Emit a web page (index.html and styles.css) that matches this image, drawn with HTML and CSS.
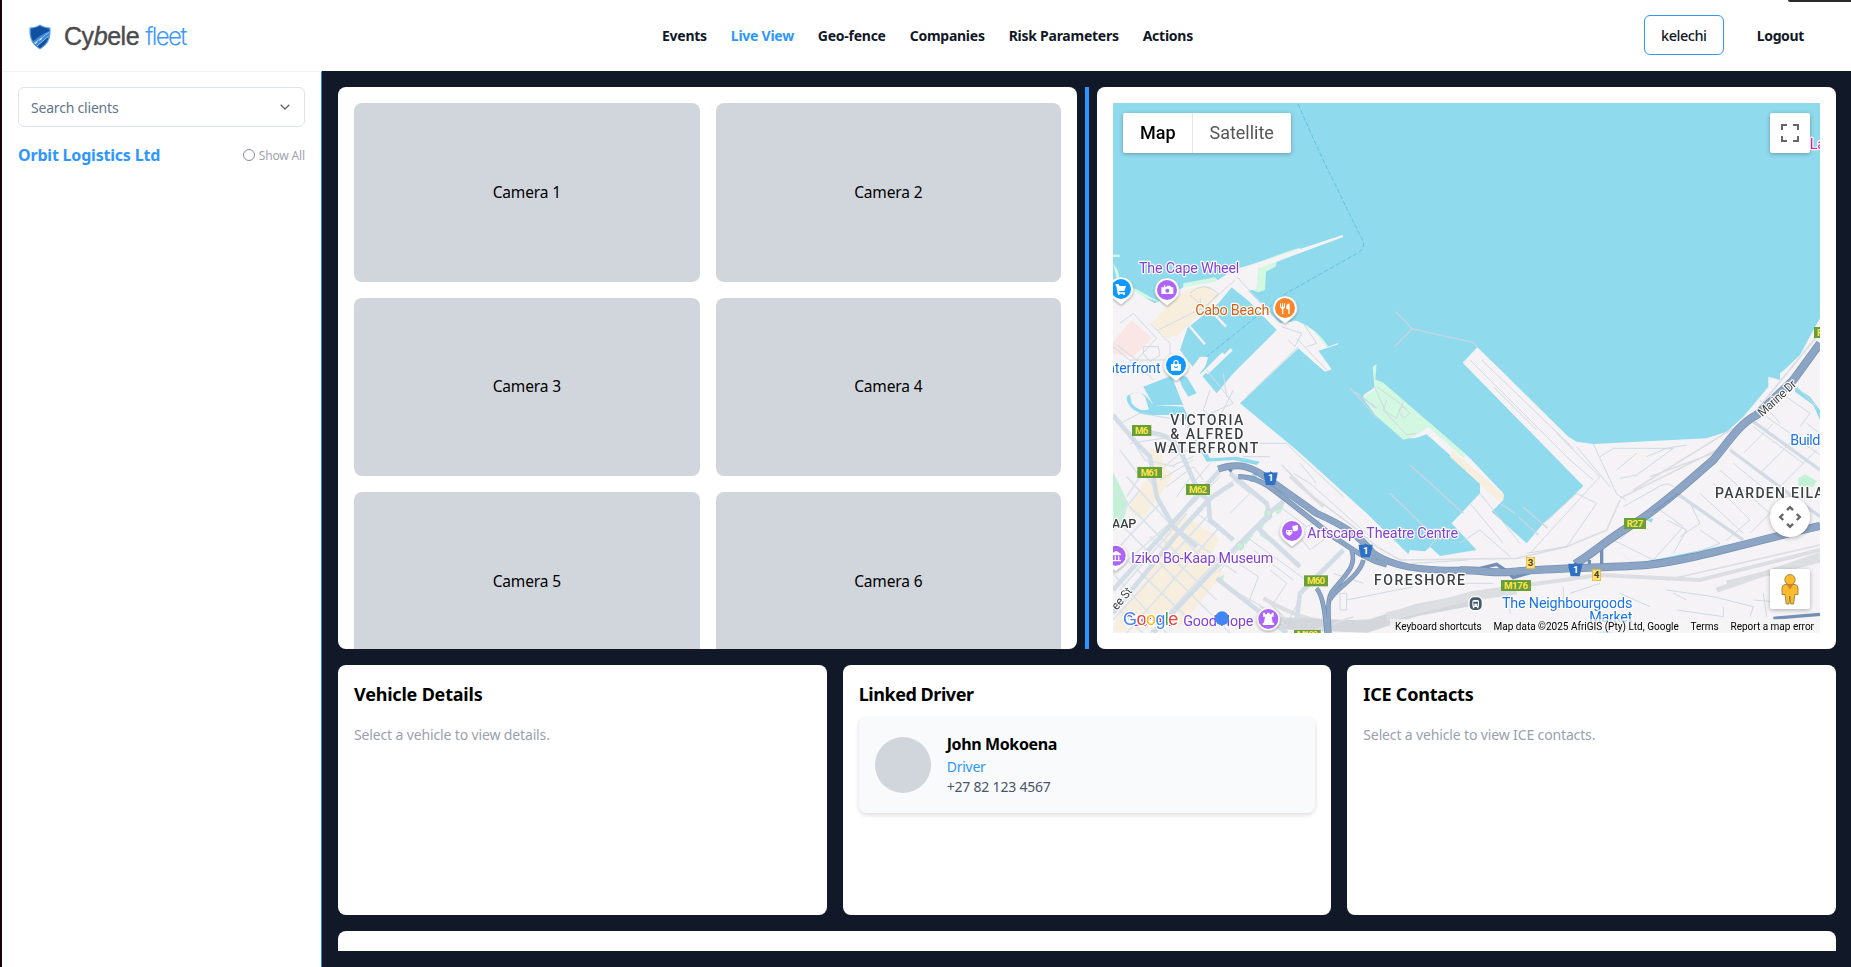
FILE: index.html
```html
<!DOCTYPE html>
<html lang="en">
<head>
<meta charset="utf-8">
<title>Cybele fleet</title>
<link rel="stylesheet" href="styles.css">
</head>
<body>
<div class="app">
  <header class="header">
    <div class="brand">
      <svg class="shield" viewBox="0 0 22 26" width="22" height="26">
        <path d="M11 .5 C14 2.500 18 3.200 21.500 3.500 C22 13 20.500 20 11 25.500 C1.500 20 0 13 .5 3.500 C4 3.200 8 2.500 11 .5Z" fill="#5a9fe6"/>
        <path d="M11 1.800 C14 3.800 17 4.400 20.200 4.700 C20.600 13 19 19 11 24.300 C3 19 1.400 13 1.800 4.700 C5 4.400 8 3.800 11 1.800Z" fill="#124f9e"/>
        <path d="M3.500 17.500 C9 13 15 9 20.300 7 L19.800 12.500 C15 15 11 19 8.500 22.500Z" fill="#3a86da"/>
        <path d="M4.500 19.500 L20 8.500 M8 22 L19.800 12" stroke="#b5d5f7" stroke-width=".8" fill="none"/>
        <path d="M6 19.800 l2.500-2 M10.500 16.300 l2.500-2" stroke="#fff" stroke-width=".9"/>
      </svg>
      <div class="wordmark"><span class="wm-a">Cy<i>b</i>ele</span><span class="wm-b">fleet</span></div>
    </div>
    <nav class="nav">
      <a>Events</a><a class="active">Live View</a><a>Geo-fence</a><a>Companies</a><a>Risk Parameters</a><a>Actions</a>
    </nav>
    <div class="account">
      <button class="user">kelechi</button>
      <a class="logout">Logout</a>
    </div>
  </header>

  <div class="body">
    <aside class="sidebar">
      <div class="select">
        <span>Search clients</span>
        <svg width="10" height="6" viewBox="0 0 10 6"><path d="M.7.700 5 5 9.300.7" fill="none" stroke="#666" stroke-width="1.300"/></svg>
      </div>
      <div class="client">
        <span class="client-name">Orbit Logistics Ltd</span>
        <span class="show-all"><i class="radio"></i>Show All</span>
      </div>
    </aside>

    <main class="main">
      <section class="top">
        <div class="card cameras">
          <div class="cam">Camera 1</div><div class="cam">Camera 2</div>
          <div class="cam">Camera 3</div><div class="cam">Camera 4</div>
          <div class="cam">Camera 5</div><div class="cam">Camera 6</div>
        </div>
        <div class="divider"></div>
        <div class="card map-card">
          <div class="map">
            <svg class="map-art" viewBox="39 39 2121 1590" width="707" height="530">
              <rect x="39" y="39" width="2121" height="1590" fill="#90daee"/>
              <!-- parks on the shoreline -->
              <g fill="#d3f8e2">
                <path d="M39 494h20v7H39z M39 520l14 20 8 35-8 2z M60 585 L110 598 150 620 190 640 90 610Z"/>
                <path d="M250 580 L345 562 355 574 400 545 560 485 600 473 600 482 530 515 527 530 498 545 495 600 475 607 450 598 430 570 250 600Z"/>
                <path d="M580 690 Q640 705 684 768 L675 775 610 720Z"/>
              </g>
              <!-- land -->
              <path fill="#f5f3f5" d="M39 595 L95 600 165 640 250 592 345 575 400 540 520 503 728 435 730 441 530 515 475 535 468 596 445 602 540 700 590 692 640 722 680 772 715 759 715 763 655 782 695 838 675 845 640 815 595 775 420 940 590 1080 800 1270 925 1392 930 1380 975 1384 990 1370 1020 1398 1130 1380 1055 1300 1140 1210 1140 1180 1080 1122 980 1033 945 1045 912 1045 830 970 790 915 825 892 850 890 990 1000 1110 1105 1210 1210 1210 1230 1175 1265 1280 1360 1330 1300 1350 1285 1450 1188 1088 818 1132 772 1200 838 1405 1040 1430 1055 1480 1062 1820 1045 1880 1025 1930 980 2005 890 2005 860 2040 870 2040 850 2055 838 2100 795 2140 720 2160 685 2160 1629 39 1629Z"/>
              <!-- inner basins -->
              <g fill="#90daee">
                <path d="M395 592 L445 632 530 720 470 750 440 770 330 870 310 850 325 800 300 800 278 830 240 780 262 715 280 700 355 640Z"/>
                <path d="M330 810 L400 770 530 720 400 850 350 910 300 850Z"/>
                <path d="M130 890 L220 855 260 860 290 910 265 920 240 880 250 945 160 945Z"/>
                <path d="M80 920 Q110 895 140 920 L160 945 250 950 260 970 300 990 300 1050 330 1105 410 1100 480 1115 470 1125 400 1110 320 1115 280 1045 250 975 140 975 Q80 960 80 920Z"/>
                <path d="M460 1145l14 0-8 30-16 0z"/>
                <path d="M2085 890 L2130 920 2160 960 2160 990 2140 945 2085 905Z"/>
                <path d="M1535 1370l65 48 20 0 540-112v8l-530 122-14-8 10-6-20 0z M1640 1290l20-6-5 14z"/>
                <path d="M1494 1629 q20-14 44 0z"/>
              </g>
              <path d="M90 915q22-18 45 5l12 38q-30 10-52-18z" fill="#f5f3f5"/>
              <path d="M257 965 L300 985 325 1095 285 1045Z" fill="#f5f3f5"/>
              <g stroke="#f5f3f5" fill="none">
                <path d="M270 710 L315 763 M345 675 L378 710" stroke-width="7"/>
                <path d="M395 778 L320 850 M370 790 L290 870" stroke-width="9"/>
                <path d="M225 860 L265 960" stroke-width="18"/>
              </g>
              <!-- ferry route -->
              <path d="M594 42 L660 190 L745 365 L790 455 Q795 475 775 488 L550 615 L320 800" fill="none" stroke="#5fc3e0" stroke-width="3" stroke-dasharray="14 6"/>
              <!-- landuse -->
              <g fill="#fae6e4"><path d="M50 745 L95 690 155 745 100 800 39 790V760Z"/></g>
              <g fill="#f8eedd">
                <path d="M155 700 L210 640 260 600 320 585 360 620 270 700 235 735 200 745Z"/>
                <path d="M150 1075h35l5 60 30 15-35 60-60 80-40-30 30-60 40-50z"/>
                <path d="M210 1300 L260 1280 360 1345 330 1400 370 1450 240 1610 39 1625 60 1560 130 1480 180 1380Z"/>
                <path d="M1055 1080 L1212 1215 1210 1228 1195 1232 1050 1100Z"/>
              </g>
              <g fill="#d3f8e2">
                <path d="M818 830 l12-8-4 46 24 10 140 122 110 95-10 8-105-92-38 26-37 12-82-72-42-55 38-22z"/>
                <path d="M2095 1165l20-12 35 20-10 18h-45z" fill="#c3f1d5"/>
                <path d="M39 1145 L85 1240 70 1290 39 1325Z" fill="#c3f1d5"/>
                <path d="M525 1260 l30-25-12 30-10 10z M430 1355l35-25-28 35z M470 1320l30-30-20 40z M480 1325l55 35-10 5-45-28z M355 1465l18-12-4 20z" fill="#c3f1d5"/>
              </g>
              <!-- breakwaters -->
              <g fill="none" stroke="#c9d5e2" stroke-width="4">
                <path d="M887 665 L937 717 1110 755 1120 757 1132 772 M937 717 L883 770"/>
                <path d="M752 895 L832 985 M765 905 L830 955 M930 1125 L1090 1270 M870 1210 L1010 1345 985 1375 M1200 1240l45 30 M1268 1250l75 65 M1255 1280l60 55"/>
              </g>
              <!-- rail yards -->
              <g fill="none" stroke="#dcdee2">
                <path d="M490 1525 Q600 1590 700 1600 L860 1590 1110 1510 1320 1480 1500 1455 1800 1470 2160 1380" stroke-width="12"/>
                <path d="M540 1600 L800 1610 950 1560 1110 1530" stroke="#d3d6da" stroke-width="36"/>
                <path d="M860 1580 L1110 1520 1250 1500" stroke-width="26"/>
                <path d="M1850 1500 L2160 1395 M1880 1480 L2160 1410" stroke-width="16"/>
                <path d="M500 1530l60 60 M480 1550l80 60 M620 1630 L760 1580 M1700 1470 L2160 1365" stroke-width="5"/>
                <path d="M545 1125 L640 1220 760 1310 830 1370 900 1410 1250 1405 1400 1370 1520 1320 1560 1230 M1560 1225 L1850 1080 1930 1010 2150 740 M1600 1200 L1900 1015 M1650 1160 L1840 1090" stroke-width="5"/>
                <path d="M570 1160l100 90" stroke-width="9"/>
              </g>
              <!-- local streets -->
              <g fill="none" stroke="#cfdae3" stroke-width="3">
                <path d="M60 700l40-30 70 75-60 65-60-45 M40 770l60 50 M130 770h45l5 25-30 20-20-25z M60 830l50-10 50 50 M150 700l60 60 0 50-120 0 M270 610q40-40 85 0l-40 45-45-40 M300 625l5 40 M405 570l-90 80-140 70 M410 560l130 140 M545 710l60 20-20 40-20-20 M590 745l90 95"/>
                <path d="M595 770 L440 920 M610 700l40 60-30 10 M320 840l80 100-90 40 M330 900l-20 60 60 60 M400 900l-40 80 M370 850l10 70"/>
                <path d="M60 1000l60-30 120 20 40 40 M90 1060l130-20 M190 1060l50 30-70 60 M200 1090l80-10 M210 1130l70-30 M180 1170l100-60 M200 1190l80-60 30 40 M230 1220l50-70"/>
                <path d="M440 1060l120 0 40 40 130 120 M430 1100l80 0 M580 1150l50 30 180 160 M600 1120l50 60 M330 1120l-50 60 M360 1160l-90 90 M390 1180l-100 90 110 80 M400 1170l50 40-60 60"/>
                <path d="M355 1445l90-100 180 130-60 120-210-120 M415 1420l60 40-30 80 M460 1380l120 90 M510 1440l50 40-40 60 M540 1250l80 60 40-20 M590 1330l40 50 80-60"/>
                <path d="M720 1510h20v50h-20z M740 1530l200-40"/>
              </g>
              <g fill="none" stroke="#dbe4ec" stroke-width="5">
                <path d="M39 1300 L120 1200 M39 1390 L180 1240 M39 1450 L220 1290 M60 1500 L260 1270 M39 1590 L330 1270 M80 1629 L360 1310 M150 1629 L370 1390"/>
                <path d="M39 1200 L260 1420 M80 1160 L300 1400 M39 1280 L390 1629 M39 1370 L280 1600 M39 1450 L200 1629 M200 1290 L410 1450 M150 1340 L350 1530 M39 1540l90 89"/>
                <path d="M60 1080l60 80-40 60 M120 1130l50 70 M85 1030l50 80 90 20"/>
              </g>
              <g fill="none" stroke="#d3dde7" stroke-width="14">
                <path d="M39 975 L110 1060 150 1100 170 1220 220 1310 290 1370 M120 1025 Q220 1030 240 1080 L280 1170 300 1210 325 1230 330 1290 400 1350 M360 1140 L39 1500 M400 1180 L330 1225 225 1340 39 1570 M390 1150 L500 1240 510 1280 470 1310 600 1430 M510 1270 L330 1450 160 1629 M500 1275 L550 1235 M730 1380 L600 1510 590 1590 M350 1465 L560 1629"/>
              </g>
              <g fill="#c3f1d5" stroke="#cddbe3" stroke-width="4"><circle cx="505" cy="1270" r="10"/><circle cx="420" cy="1368" r="11"/></g>
              <g transform="translate(1080 810)" fill="none" stroke="#cfdae3" stroke-width="3">
                <path d="M65 0 L340 265 M30 0L330 300 400 360 M100 80L230 210 M400 252l70 150 30 20 M350 260l100 120 M290 220l130 130-210 230 M250 490l100-90 60 30-90 130-120 20 M420 290l40-25 180 0-110 80-50 10 M470 330l60-50 M560 290l60-25 60-10 M640 380q-20-20-60 10l-90 50 M560 460l-80 80 M460 540l120 60 90-100-70-50 M620 480l60 30-40 70 M690 430l30 60-60 40 M720 510l60 40-80 30"/>
                <path d="M920 170l160 115 M880 200l150 110 M850 280l90-90 M900 340l120-120 M960 380l110-110 M820 310l110 90 M780 330l150 130-60 60 M760 370l110 110-70 60 M720 400l130 120 M950 90l100 70-30 40 M990 60l80 80 M900 120l60 70 M1040 190l40 30"/>
                <path d="M0 550l60-40 90 80 M30 430l100 120 M60 400l120 150 M310 680v60 M330 700l90-30 M0 670h100 M620 690l140 20 120 30-10 30 M640 700l40 20 M880 720l120 10 M790 740v30l-140-20 M480 700l90 40 M910 700l10 70 M150 700v60"/>
                <path d="M810 270 L1080 470 M880 185 L1080 330 M650 400 L850 540" stroke="#d0dbe6" stroke-width="10"/>
              </g>
              <g transform="translate(0 810)" fill="none" stroke="#cfdae3" stroke-width="3">
                <path d="M825 85l30 65 M830 80l70 50 20 20 M860 120l-10 30 40 25 20-50 M895 150l15-10 20 20-20 15z M850 150l70 75 30-5 M935 610l170-10 M700 640l90 30"/>
              </g>
              <!-- motorways -->
              <g transform="translate(0 810)" fill="none" stroke-linejoin="round">
                <g stroke="#738fb4">
                  <path d="M355 327 C420 305 460 320 520 368 L650 460 C740 500 780 530 820 580 C880 620 950 631 1085 631" stroke-width="21"/>
                  <path d="M415 350 C480 350 520 390 560 420 L700 530 C760 570 800 600 860 615" stroke-width="16"/>
                  <path d="M755 570 C770 620 740 640 700 690 C680 710 685 760 688 820 M790 600 C780 650 700 690 690 720 M650 685 C670 710 675 760 680 820" stroke-width="14"/>
                  <path d="M378 318 L395 335" stroke-width="9"/>
                </g>
                <g stroke="#8ca5c4">
                  <path d="M355 327 C420 305 460 320 520 368 L650 460 C740 500 780 530 820 580 C880 620 950 631 1085 631" stroke-width="17"/>
                  <path d="M415 350 C480 350 520 390 560 420 L700 530 C760 570 800 600 860 615" stroke-width="12"/>
                  <path d="M755 570 C770 620 740 640 700 690 C680 710 685 760 688 820 M790 600 C780 650 700 690 690 720 M650 685 C670 710 675 760 680 820" stroke-width="10"/>
                </g>
              </g>
              <g transform="translate(1080 810)" fill="none">
                <g stroke="#738fb4">
                  <path d="M0 631 C60 630 100 640 150 636 C250 625 480 622 560 615 C700 600 850 550 1080 498" stroke-width="24"/>
                  <path d="M345 612 C400 580 450 530 540 480 C640 410 700 350 760 300 C810 240 840 190 890 165 L1000 60 1080 -50" stroke-width="25"/>
                  <path d="M425 560V615 M388 600v20 M370 620l40 12 20-10 M60 625l50-12 30 20 20 20 50-15 M940 775l140-12" stroke-width="10"/>
                </g>
                <g stroke="#8ca5c4">
                  <path d="M0 631 C60 630 100 640 150 636 C250 625 480 622 560 615 C700 600 850 550 1080 498" stroke-width="20"/>
                  <path d="M345 612 C400 580 450 530 540 480 C640 410 700 350 760 300 C810 240 840 190 890 165 L1000 60 1080 -50" stroke-width="21"/>
                </g>
                <path d="M580 455 L655 400" stroke="#738fb4" stroke-width="3"/>
              </g>

              <!-- road shields -->
              <g class="shield-text">
                <g fill="#689f38"><rect x="96" y="1005" width="58" height="33"/><rect x="112" y="1131" width="74" height="33"/><rect x="258" y="1182" width="72" height="33"/><rect x="612" y="1456" width="72" height="33"/><rect x="1572" y="1284" width="66" height="33"/><rect x="1203" y="1470" width="90" height="33"/><rect x="582" y="1620" width="80" height="20"/><rect x="2142" y="711" width="40" height="33"/></g>
                <g fill="#ffe44d"><text x="125" y="1031" textLength="40">M6</text><text x="149" y="1157" textLength="54">M61</text><text x="294" y="1208" textLength="54">M62</text><text x="648" y="1482" textLength="54">M60</text><text x="1605" y="1310" textLength="50">R27</text><text x="1248" y="1496" textLength="72">M176</text><text x="622" y="1645" textLength="64">M100</text><text x="2160" y="737">R</text></g>
                <g fill="#2f6fc4"><path id="n1" d="M491 1147 q19 2 21-4 q2 6 21 4 l-2 12 -6 26 h-27 l-6-26z"/><use href="#n1" x="285" y="217"/><use href="#n1" x="914" y="274"/></g>
                <g fill="#fff"><text x="512" y="1174">1</text><text x="797" y="1391">1</text><text x="1427" y="1448">1</text></g>
                <g fill="#ffe070" stroke="#e0b030" stroke-width="2"><rect x="1279" y="1402" width="25" height="34"/><rect x="1477" y="1438" width="25" height="34"/></g>
                <g fill="#4a4326"><text x="1291.500" y="1428">3</text><text x="1489.500" y="1465">4</text></g>
              </g>

              <!-- place pins -->
              <g>
                <g class="pin-base" fill="#fff">
                  <path id="base" d="M63 562a36 36 0 0 1 24 63l-24 19-24-19a36 36 0 0 1 24-63z"/>
                  <use href="#base" x="138" y="3"/><use href="#base" x="492" y="57"/><use href="#base" x="165" y="229"/><use href="#base" x="513" y="726"/><use href="#base" x="-16" y="800"/>
                  <circle cx="505" cy="1587" r="35"/>
                </g>
                <circle cx="63" cy="597" r="30" fill="#1098ff"/><circle cx="201" cy="600" r="30" fill="#ae63fa"/><circle cx="555" cy="654" r="30" fill="#fb8526"/><circle cx="228" cy="826" r="30" fill="#1098ff"/><circle cx="576" cy="1323" r="30" fill="#ae63fa"/><circle cx="47" cy="1397" r="30" fill="#ae63fa"/><circle cx="505" cy="1587" r="30" fill="#ae63fa"/>
                <g fill="#fff">
                  <path d="M47 582h8l4 6h19l-5 15H57l1 4h17v4H53l-4-23h-2z"/><circle cx="57" cy="612" r="3"/><circle cx="72" cy="612" r="3"/>
                  <path d="M184 592h8v-6h4v6h2l4-5h8l4 5h6v20h-36z"/><circle cx="202" cy="602" r="6" fill="#ae63fa"/>
                  <path d="M540 640h3v10h3v-10h3v10h3v-10h3v12l-5 5v15h-4v-15l-6-5z M569 640v32h-4v-14h-6v-10q2-8 10-8z"/>
                  <path fill-rule="evenodd" d="M213 822h7v-4a8 8 0 0 1 16 0v4h7v20h-30z m11 0h8v-4a4 4 0 0 0-8 0z m-2 7a6 6 0 0 0 12 0h-3a3 3 0 0 1-6 0z"/>
                  <path d="M558 1320h19v10q-9 14-19 0z M577 1308l17-3v14q-8 8-15 3z"/><circle cx="563" cy="1325" r="2" fill="#ae63fa"/><circle cx="572" cy="1325" r="2" fill="#ae63fa"/>
                  <path d="M33 1392l16-10 14 10v4H33z m2 6h4v12h-4z m9 0h4v12h-4z m10 0h4v12h-4z M32 1410h31v4H32z"/>
                  <path d="M489 1568h6v5h6v-5h8v5h6v-5h6v12h-6l3 18h4v7h-34v-7h4l3-18h-6z"/>
                </g>
                <rect x="1107" y="1520" width="40" height="42" rx="15" fill="#455a68" stroke="#fff" stroke-width="4"/>
                <path fill="#fff" fill-rule="evenodd" d="M1121 1530h12q4 0 4 5v12q0 4-3 4l3 4h-4l-3-4h-6l-3 4h-4l3-4q-3 0-3-4v-12q0-5 4-5z m-1 5v6h14v-6z"/>
                <circle cx="1122" cy="1545" r="2" fill="#455a68"/><circle cx="1132" cy="1545" r="2" fill="#455a68"/>
              </g>

              <!-- labels -->
              <g class="poi" fill="#8040d8">
                <text x="117" y="550" textLength="301">The Cape Wheel</text>
                <text x="622" y="1344" textLength="452">Artscape Theatre Centre</text>
                <text x="93" y="1419" textLength="427">Iziko Bo-Kaap Museum</text>
                <text x="72" y="1607" textLength="160">Castle of</text>
                <text x="250" y="1607" textLength="210">Good Hope</text>
                <text x="286" y="675" textLength="222" fill="#d2600f">Cabo Beach</text>
                <g fill="#1a73e8">
                  <text x="22" y="848" textLength="160">aterfront</text>
                  <text x="1206" y="1555" textLength="391">The Neighbourgoods</text>
                  <text x="1468" y="1596" textLength="129">Market</text>
                  <text x="2071" y="1066" textLength="90">Build</text>
                </g>
                <text x="2129" y="178" fill="#e22ba8">Lagoon</text>
              </g>
              <g class="area">
                <text x="211" y="1006" textLength="219">VICTORIA</text>
                <text x="211" y="1048" textLength="219">&amp; ALFRED</text>
                <text x="163" y="1090" textLength="312">WATERFRONT</text>
                <text x="822" y="1486" textLength="273">FORESHORE</text>
                <text x="1845" y="1225" textLength="326">PAARDEN EILA</text>
                <text class="aap" x="36" y="1314" textLength="73">AAP</text>
                <text class="street" transform="translate(1987 982) rotate(-43)" textLength="142">Marine Dr</text>
                <text class="street" transform="translate(50 1562) rotate(-50)" textLength="75">ee St</text>
              </g>
              <g class="glogo"><text x="69" y="1605" textLength="166"><tspan fill="#4285f4">G</tspan><tspan fill="#ea4335">o</tspan><tspan fill="#fbbc04">o</tspan><tspan fill="#4285f4">g</tspan><tspan fill="#34a853">l</tspan><tspan fill="#ea4335">e</tspan></text></g>
              <circle cx="366" cy="1585" r="21" fill="#4285f4"/>
            </svg>

            <div class="map-type"><span class="on">Map</span><span>Satellite</span></div>
            <div class="ctl fullscreen"><svg width="18" height="18" viewBox="0 0 18 18"><path d="M1 6V1h5M12 1h5v5M17 12v5h-5M6 17H1v-5" fill="none" stroke="#666" stroke-width="2"/></svg></div>
            <div class="ctl pan"><svg width="24" height="24" viewBox="0 0 24 24"><path d="M9 5.200 12 2.200l3 3M9 18.800l3 3 3-3M5.200 9l-3 3 3 3M18.800 9l3 3-3 3" fill="none" stroke="#666" stroke-width="2.400"/></svg></div>
            <div class="ctl pegman"><svg width="18" height="31" viewBox="0 0 18 31"><g fill="#fbbc2c" stroke="#8d7336" stroke-width=".8"><path d="M4 10.500 Q1 11 1 14 V20.500 H4 L5.200 30 H8 L8.800 22 L9.800 30 H12.600 L13.800 20.500 H17 V14 Q17 11 14 10.500Z"/><circle cx="9" cy="5.700" r="5.200"/></g><path d="M6 10.800h6l-3 5z" fill="#e07b35"/></svg></div>
            <div class="credits"><span>Keyboard shortcuts</span><span>Map data ©2025 AfriGIS (Pty) Ltd, Google</span><span>Terms</span><span>Report a map error</span></div>
          </div>
        </div>
      </section>

      <section class="details">
        <div class="card panel"><h2>Vehicle Details</h2><p class="hint">Select a vehicle to view details.</p></div>
        <div class="card panel">
          <h2 class="tight">Linked Driver</h2>
          <div class="driver">
            <div class="avatar"></div>
            <div><div class="d-name">John Mokoena</div><div class="d-role">Driver</div><div class="d-phone">+27 82 123 4567</div></div>
          </div>
        </div>
        <div class="card panel"><h2>ICE Contacts</h2><p class="hint">Select a vehicle to view ICE contacts.</p></div>
      </section>
      <section class="next"></section>
    </main>
  </div>
  <div class="corner"></div>
</div>
</body>
</html>
```

FILE: styles.css
```css
* { box-sizing: border-box; }
body { margin: 0; font-family: "Noto Sans", "Open Sans", sans-serif; color: #000; overflow: hidden; }
.app { position: relative; width: 1851px; height: 967px; display: flex; flex-direction: column; border-left: 2px solid #16040f; background: #fff; }
.header { height: 71px; flex: none; display: flex; align-items: center; padding: 0 47px 0 27px; }
.brand { display: flex; align-items: center; width: 633px; flex: none; gap: 13px; }
.shield { display: block; margin-top: 2px; }
.wordmark { display: flex; align-items: baseline; gap: 6px; margin-top: 2px; font: 25px/30px "Liberation Sans", sans-serif; }
.wm-a { color: #4b4b4d; letter-spacing: -.45px; -webkit-text-stroke: .4px #4b4b4d; }
.wm-b { color: #3d97fb; font-family: Inter, sans-serif; font-weight: 300; font-size: 24px; letter-spacing: -1.65px; }
.nav { display: flex; gap: 24px; font-size: 14px; font-weight: 700; color: #111827; letter-spacing: -.26px; white-space: nowrap; }
.nav .active { color: #2e96ff; }
.account { margin-left: auto; display: flex; align-items: center; gap: 33px; font-size: 14px; }
.user { width: 80px; height: 40px; padding: 0; margin-bottom: 1px; border: 1px solid #2e96ff; border-radius: 6px; background: #fff; font: 500 14.500px "Noto Sans", sans-serif; letter-spacing: -.5px; color: #111827; }
.logout { font-weight: 700; color: #111827; letter-spacing: -.35px; }
.body { flex: 1; display: flex; min-height: 0; }
.sidebar { width: 320px; flex: none; padding: 15px 16px; border-top: 1px solid #f0f1f3; border-right: 1px solid #2e86e8; }
.select { height: 40px; border: 1px solid #dfe4ec; border-radius: 6px; display: flex; align-items: center; justify-content: space-between; padding: 0 14px 0 12px; font-size: 14px; letter-spacing: -.2px; color: #64748b; }
.client { display: flex; align-items: center; justify-content: space-between; margin-top: 16px; height: 24px; }
.client-name { font-size: 16px; font-weight: 700; color: #2e96ff; letter-spacing: -.2px; white-space: nowrap; }
.show-all { display: flex; align-items: center; gap: 4px; font-size: 12px; letter-spacing: -.15px; color: #9ca3af; }
.radio { width: 12px; height: 12px; border: 1px solid #8b8b93; border-radius: 50%; }
.main { flex: 1; min-width: 0; background: #111827; padding: 16px 15px 16px 16px; display: flex; flex-direction: column; gap: 16px; }
.card { background: #fff; border-radius: 8px; overflow: hidden; }
.top { display: flex; height: 562px; flex: none; gap: 8px; }
.divider { width: 4px; background: #2e96ff; }
.cameras { flex: 1; padding: 16px; display: grid; grid-template-columns: 1fr 1fr; grid-auto-rows: 178.67px; gap: 16px; }
.cam { background: #d1d5dc; border-radius: 8px; display: flex; align-items: center; justify-content: center; padding-bottom: 1px; font-size: 15.500px; letter-spacing: -.15px; }
.map-card { flex: 1; padding: 16px; }
.map { position: relative; height: 530px; overflow: hidden; font-family: Roboto, sans-serif; }
.map-art { display: block; }
.map-art text { font-family: Roboto, sans-serif; }
.pin-base { filter: drop-shadow(0 3px 3px rgba(0,0,0,.35)); }
.poi text { font-size: 43px; paint-order: stroke; stroke: #fff; stroke-width: 7px; stroke-linejoin: round; }
.area text { font-size: 42px; font-weight: 500; fill: #3c4043; paint-order: stroke; stroke: #fff; stroke-width: 7px; stroke-linejoin: round; }
.area .aap { font-size: 38px; }
.area .street { font-size: 36px; font-weight: 400; }
.shield-text text { font-size: 29px; font-weight: 700; text-anchor: middle; }
.glogo text { font: 54px "Liberation Sans", sans-serif; paint-order: stroke; stroke: #fff; stroke-width: 8px; }
.map-type { position: absolute; left: 10px; top: 10px; height: 40px; display: flex; background: #fff; border-radius: 2px; box-shadow: 0 1px 4px rgba(0,0,0,.3); font-size: 18px; line-height: 40px; color: #565656; letter-spacing: -.02px; }
.map-type span { padding: 0 17px; }
.map-type .on { font-weight: 500; color: #000; box-shadow: inset -1px 0 #e6e6e6; }
.ctl { position: absolute; right: 10px; width: 40px; height: 40px; background: #fff; border-radius: 2px; box-shadow: 0 1px 4px rgba(0,0,0,.3); display: flex; align-items: center; justify-content: center; }
.fullscreen { top: 10px; }
.pan { top: 394px; border-radius: 50%; }
.pegman { top: 466px; }
.credits { position: absolute; right: 0; bottom: 0; height: 14px; width: 430px; padding: 0 6px 0 5px; display: flex; justify-content: space-between; background: rgba(245,245,245,.7); font-size: 10px; line-height: 15px; color: #000; white-space: nowrap; }
.details { display: grid; grid-template-columns: repeat(3, 1fr); gap: 16px; height: 250px; flex: none; }
.panel { padding: 15px 16px 16px; }
.panel h2 { margin: 0; font-size: 18px; line-height: 28px; font-weight: 700; letter-spacing: -.2px; }
.panel h2.tight { letter-spacing: -.45px; }
.hint { margin: 17px 0 0; font-size: 14px; line-height: 20px; color: #99a1af; letter-spacing: -.14px; }
.driver { margin-top: 9px; height: 96px; border-radius: 8px; background: #f9fafb; box-shadow: 0 2px 5px rgba(0,0,0,.14); display: flex; align-items: center; gap: 16px; padding: 0 16px; }
.avatar { width: 56px; height: 56px; border-radius: 50%; background: #d1d5dc; }
.d-name { margin-top: -1px; padding-bottom: 1px; font-size: 16px; line-height: 24px; font-weight: 700; letter-spacing: -.38px; }
.d-role { font-size: 14px; line-height: 20px; color: #2e96ff; letter-spacing: -.25px; }
.d-phone { font-size: 14px; line-height: 20px; color: #4a5565; letter-spacing: -.2px; }
.next { flex: 1; background: #fff; border-radius: 8px 8px 0 0; }
.corner { position: absolute; right: 0; top: 0; width: 63px; height: 2px; background: #2b2b2b; border-radius: 0 0 0 3px; }
```
